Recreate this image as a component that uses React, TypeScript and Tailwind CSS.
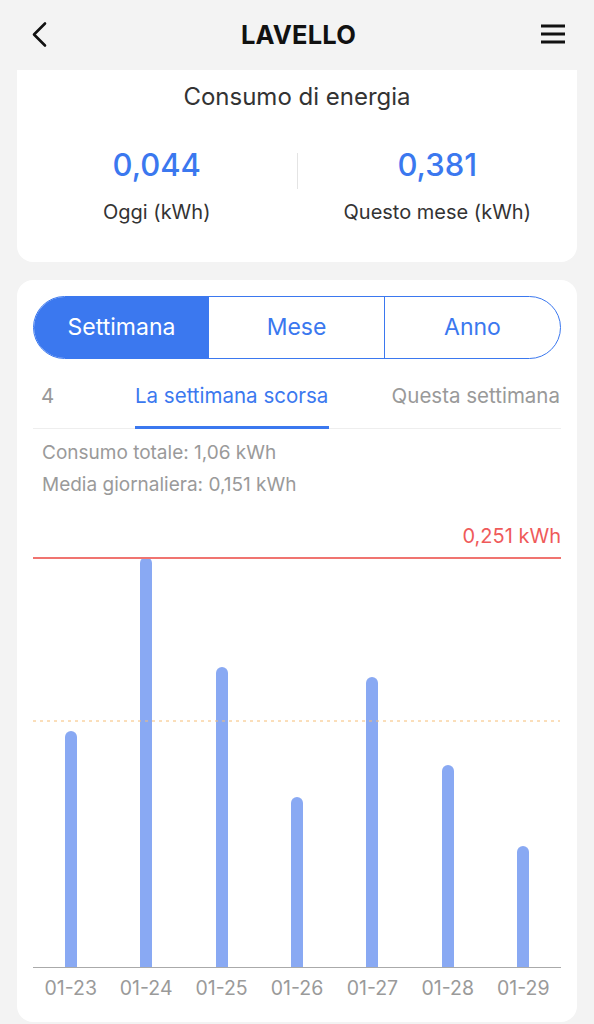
import React from "react";

const bars = [
  { label: "01-23", h: 236 },
  { label: "01-24", h: 410 },
  { label: "01-25", h: 300 },
  { label: "01-26", h: 170 },
  { label: "01-27", h: 290 },
  { label: "01-28", h: 202 },
  { label: "01-29", h: 121 },
];

export default function App() {
  return (
    <div
      className="w-[594px] h-[1024px] overflow-hidden bg-[#f3f3f3]"
      style={{ fontFamily: "Inter, 'Noto Sans', sans-serif" }}
    >
      {/* Header */}
      <div className="h-[70px] flex items-center justify-between pl-[30px] pr-[28px]">
        <svg width="20" height="28" viewBox="0 0 20 28" className="mt-[-1px]">
          <path d="M15 2.5 L4 13.5 L15 24.5" fill="none" stroke="#111" strokeWidth="2.6" strokeLinecap="round" strokeLinejoin="round" />
        </svg>
        <div className="text-[25.5px] font-bold text-[#111] tracking-[0.2px] ml-[6px]">LAVELLO</div>
        <svg width="25" height="22" viewBox="0 0 25 22" className="mt-[-4px]">
          <rect x="0" y="2.5" width="24" height="3" fill="#111" />
          <rect x="0" y="10.5" width="24" height="3" fill="#111" />
          <rect x="0" y="18.5" width="24" height="3" fill="#111" />
        </svg>
      </div>

      {/* Card 1 */}
      <div className="mx-[17px] h-[192px] bg-white rounded-b-[16px] flex flex-col items-center">
        <div className="mt-[13px] text-[24px] leading-[28px] text-[#333]">Consumo di energia</div>
        <div className="mt-[36px] w-full flex items-start">
          <div className="flex-1 flex flex-col items-center">
            <div className="text-[31px] leading-[36px] font-medium text-[#3b78ef]">0,044</div>
            <div className="mt-[17px] text-[20px] leading-[24px] text-[#333]">Oggi (kWh)</div>
          </div>
          <div className="w-px h-[36px] bg-[#e4e4e4] mt-[6px]" />
          <div className="flex-1 flex flex-col items-center">
            <div className="text-[31px] leading-[36px] font-medium text-[#3b78ef]">0,381</div>
            <div className="mt-[17px] text-[20px] leading-[24px] text-[#333]">Questo mese (kWh)</div>
          </div>
        </div>
      </div>

      {/* Card 2 */}
      <div className="mx-[17px] mt-[18px] h-[742px] bg-white rounded-[16px] px-[16px] pt-[16px]">
        {/* Segmented */}
        <div className="h-[63px] flex rounded-full border-[1.5px] border-[#3b78ef] overflow-hidden">
          <div className="w-[175px] flex items-center justify-center bg-[#3b78ef] text-white text-[23px]">Settimana</div>
          <div className="flex-1 flex items-center justify-center text-[#3b78ef] text-[23px] border-r-[1.5px] border-[#3b78ef]">Mese</div>
          <div className="flex-1 flex items-center justify-center text-[#3b78ef] text-[23px]">Anno</div>
        </div>

        {/* Tabs */}
        <div className="h-[70px] flex items-stretch border-b border-[#eeeeee] text-[20.5px]">
          <div className="pl-[8px] w-[102px] flex items-center text-[#999] pt-[6px]">4</div>
          <div className="w-[194px] flex items-center border-b-[3px] border-[#3b78ef] mb-[-1px] text-[#3b78ef] pt-[7px] whitespace-nowrap">La settimana scorsa</div>
          <div className="flex-1 flex items-center justify-end text-[#999] whitespace-nowrap pt-[6px] pr-[1px]">Questa settimana</div>
        </div>

        {/* Stats */}
        <div className="pl-[9px] mt-[8px] text-[19px] leading-[32px] text-[#9a9a9a]">
          <div>Consumo totale: 1,06 kWh</div>
          <div>Media giornaliera: 0,151 kWh</div>
        </div>

        {/* Max label */}
        <div className="mt-[24px] text-right text-[20px] leading-[22px] text-[#ef5a5a]">0,251 kWh</div>

        {/* Chart */}
        <div className="relative mt-[10px] h-[411px] flex items-end border-b border-[#aaaaaa]">
          <div className="absolute left-0 right-0 top-0 h-[2px] bg-[#f07470]" />
          <svg className="absolute left-0 top-[163px]" width="527" height="2" viewBox="0 0 527 2">
            <line x1="0" y1="1" x2="527" y2="1" stroke="#f6bd74" strokeWidth="1" strokeDasharray="3 4" />
          </svg>
          {bars.map((b) => (
            <div key={b.label} className="flex-1 flex justify-center">
              <div className="w-[12px] rounded-t-full bg-[#89a9f3]" style={{ height: b.h }} />
            </div>
          ))}
        </div>
        <div className="flex mt-[8px]">
          {bars.map((b) => (
            <div key={b.label} className="flex-1 text-center text-[19.5px] leading-[24px] text-[#9a9a9a]">
              {b.label}
            </div>
          ))}
        </div>
      </div>
    </div>
  );
}
